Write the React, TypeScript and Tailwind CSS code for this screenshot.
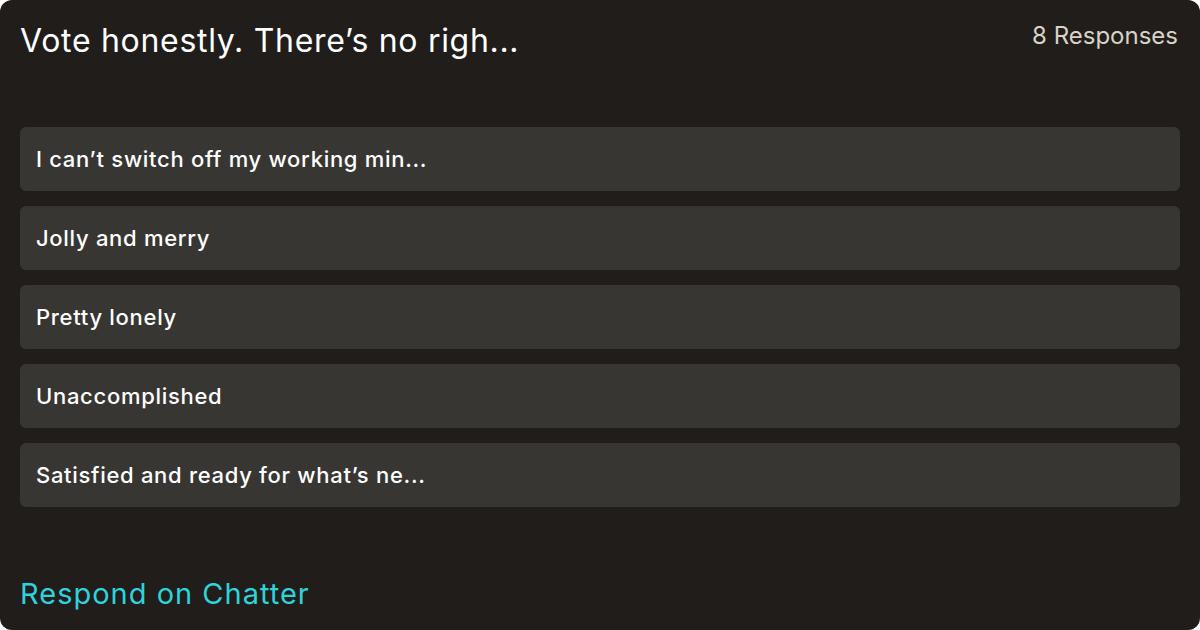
export default function App() {
  const options = [
    "I can\u2019t switch off my working min...",
    "Jolly and merry",
    "Pretty lonely",
    "Unaccomplished",
    "Satisfied and ready for what\u2019s ne...",
  ];
  return (
    <div className="w-[1200px] h-[630px] bg-white" style={{ fontFamily: "Inter, 'Noto Sans', sans-serif" }}>
      <div className="w-full h-full bg-[#201d1a] rounded-[12px] flex flex-col px-5">
        <div className="flex justify-between items-start pt-[18px] h-[127px]">
          <div className="text-white text-[32px] leading-[46px] tracking-[0.7px]">Vote honestly. There’s no righ...</div>
          <div className="text-[#d8d3c8] text-[24px] leading-[32px] pt-[2px] mr-[2px]">8 Responses</div>
        </div>
        <div className="flex flex-col gap-[15px]">
          {options.map((o) => (
            <div key={o} className="h-[64px] bg-[#383633] rounded-[6px] flex items-center px-4 text-white text-[22px] font-medium tracking-[0.7px]">
              {o}
            </div>
          ))}
        </div>
        <div className="mt-auto pb-[16px] text-[#2ed3dc] text-[29px] leading-[40px] tracking-[1px]">Respond on Chatter</div>
      </div>
    </div>
  );
}
